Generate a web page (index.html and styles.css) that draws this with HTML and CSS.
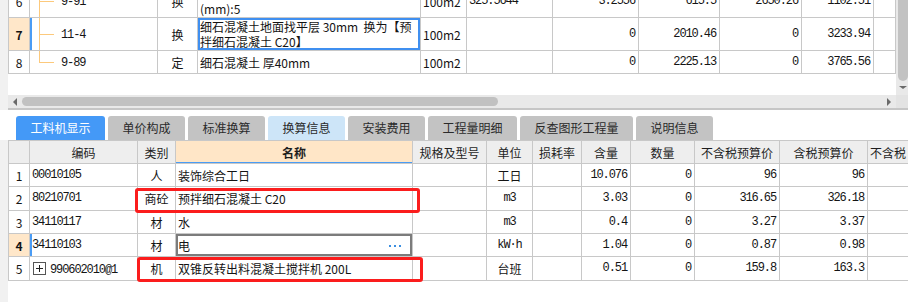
FILE: index.html
```html
<!DOCTYPE html>
<html lang="zh-CN">
<head>
<meta charset="utf-8">
<title>工料机显示</title>
<link rel="stylesheet" href="styles.css">
</head>
<body>
<div class="page">
  <div class="upper">
    <div class="gutter"></div>
    <div class="upper-main">
      <div class="upper-body">
        <div class="viewport">
          <table class="grid top-grid">
            <colgroup>
              <col class="w21"><col class="w128"><col class="w40"><col class="w223"><col class="w46"><col class="w86"><col class="w86"><col class="w81"><col class="w82"><col class="w72"><col class="w22">
            </colgroup>
            <tr class="h33">
              <td class="c">6</td>
              <td class="tree"><span class="n">9-91</span></td>
              <td class="c">换</td>
              <td class="nm">细石混凝土地面找平层 每增减10mm<br>(mm):5</td>
              <td class="l">100m2</td>
              <td class="l n">325.5644</td>
              <td class="r n">3.2556</td>
              <td class="r n">615.5</td>
              <td class="r n">2650.26</td>
              <td class="r n">1102.51</td>
              <td></td>
            </tr>
            <tr class="h33">
              <td class="c sel">7</td>
              <td class="tree mark"><span class="n">11-4</span></td>
              <td class="c">换</td>
              <td class="nm focus">细石混凝土地面找平层 30mm&nbsp; 换为【预<br>拌细石混凝土 C20】</td>
              <td class="l">100m2</td>
              <td></td>
              <td class="r n">0</td>
              <td class="r n">2010.46</td>
              <td class="r n">0</td>
              <td class="r n">3233.94</td>
              <td></td>
            </tr>
            <tr class="h23">
              <td class="c">8</td>
              <td class="tree last"><span class="n">9-89</span></td>
              <td class="c">定</td>
              <td class="nm">细石混凝土 厚40mm</td>
              <td class="l">100m2</td>
              <td></td>
              <td class="r n">0</td>
              <td class="r n">2225.13</td>
              <td class="r n">0</td>
              <td class="r n">3765.56</td>
              <td></td>
            </tr>
          </table>
        </div>
        <div class="vscroll">
          <div class="vthumb"></div>
          <div class="arrow-down"></div>
        </div>
      </div>
      <div class="hscroll">
        <div class="arrow-left"></div>
        <div class="hthumb"></div>
        <div class="spacer"></div>
        <div class="arrow-right"></div>
        <div class="corner"></div>
      </div>
    </div>
  </div>

  <div class="tabs">
    <div class="tab active">工料机显示</div>
    <div class="tab">单价构成</div>
    <div class="tab">标准换算</div>
    <div class="tab soft">换算信息</div>
    <div class="tab">安装费用</div>
    <div class="tab">工程量明细</div>
    <div class="tab">反查图形工程量</div>
    <div class="tab">说明信息</div>
  </div>

  <div class="lower">
    <div class="gutter"></div>
    <div class="lower-view">
      <table class="grid low-grid">
        <colgroup>
          <col class="w21"><col class="w108"><col class="w38"><col class="w237"><col class="w74"><col class="w46"><col class="w49"><col class="w49"><col class="w64"><col class="w85"><col class="w88"><col class="w60">
        </colgroup>
        <tr class="hd">
          <th></th>
          <th>编码</th>
          <th>类别</th>
          <th class="name-h">名称</th>
          <th>规格及型号</th>
          <th>单位</th>
          <th>损耗率</th>
          <th>含量</th>
          <th>数量</th>
          <th>不含税预算价</th>
          <th>含税预算价</th>
          <th class="l">不含税</th>
        </tr>
        <tr class="h23">
          <td class="c">1</td>
          <td class="l n">00010105</td>
          <td class="c">人</td>
          <td class="nm">装饰综合工日</td>
          <td></td>
          <td class="c">工日</td>
          <td></td>
          <td class="r n">10.076</td>
          <td class="r n">0</td>
          <td class="r n">96</td>
          <td class="r n">96</td>
          <td></td>
        </tr>
        <tr class="h24">
          <td class="c">2</td>
          <td class="l n">80210701</td>
          <td class="c">商砼</td>
          <td class="nm">预拌细石混凝土 C20</td>
          <td></td>
          <td class="c n">m3</td>
          <td></td>
          <td class="r n">3.03</td>
          <td class="r n">0</td>
          <td class="r n">316.65</td>
          <td class="r n">326.18</td>
          <td></td>
        </tr>
        <tr class="h23">
          <td class="c">3</td>
          <td class="l n">34110117</td>
          <td class="c">材</td>
          <td class="nm">水</td>
          <td></td>
          <td class="c n">m3</td>
          <td></td>
          <td class="r n">0.4</td>
          <td class="r n">0</td>
          <td class="r n">3.27</td>
          <td class="r n">3.37</td>
          <td></td>
        </tr>
        <tr class="h23">
          <td class="c sel">4</td>
          <td class="l n mark">34110103</td>
          <td class="c">材</td>
          <td class="nm edit">电<svg class="dots" width="12" height="3" viewBox="0 0 12 3"><rect x="0" y="0" width="2" height="2" fill="#3b8ee0"/><rect x="5" y="0" width="2" height="2" fill="#3b8ee0"/><rect x="10" y="0" width="2" height="2" fill="#3b8ee0"/></svg></td>
          <td></td>
          <td class="c n">kW·h</td>
          <td></td>
          <td class="r n">1.04</td>
          <td class="r n">0</td>
          <td class="r n">0.87</td>
          <td class="r n">0.98</td>
          <td></td>
        </tr>
        <tr class="h24">
          <td class="c">5</td>
          <td class="l"><svg class="plus" width="13" height="13" viewBox="0 0 13 13"><rect x="0.5" y="0.5" width="12" height="12" fill="#fff" stroke="#555"/><path d="M3 6.5h7M6.5 3v7" stroke="#222" stroke-width="1"/></svg><span class="n">990602010@1</span></td>
          <td class="c">机</td>
          <td class="nm">双锥反转出料混凝土搅拌机 200L</td>
          <td></td>
          <td class="c">台班</td>
          <td></td>
          <td class="r n">0.51</td>
          <td class="r n">0</td>
          <td class="r n">159.8</td>
          <td class="r n">163.3</td>
          <td></td>
        </tr>
      </table>
      <div class="redbox box1"></div>
      <div class="redbox box2"></div>
    </div>
  </div>
</div>
</body>
</html>
```
FILE: styles.css
```css
* { box-sizing: border-box; margin: 0; padding: 0; }
html, body { width: 908px; height: 302px; overflow: hidden; background: #fff; }
body { font-family: "Noto Sans CJK SC", "Noto Sans", sans-serif; font-size: 12px; color: #141414; }

.page { display: flex; flex-direction: column; height: 302px; }

.gutter { width: 8px; flex: none; background: #f1f1f1; }

/* upper pane */
.upper { display: flex; height: 110px; flex: none; }
.upper-main { flex: 1; display: flex; flex-direction: column; }
.upper-body { display: flex; height: 95px; }
.viewport { flex: 1; overflow: hidden; background: #fff; }
.top-grid { margin-top: -16px; }

.vscroll { width: 13px; flex: none; background: #e9e9e9; display: flex; flex-direction: column; align-items: center; }
.vthumb { width: 10px; height: 81px; background: #c2c2c2; border-radius: 0 0 5px 5px; }
.arrow-down { margin-top: 5px; width: 0; height: 0; border-left: 4px solid transparent; border-right: 4px solid transparent; border-top: 3px solid #6a6a6a; }

.hscroll { height: 15px; display: flex; align-items: center; background: #e9e9e9; border-bottom: 2px solid #c6c6c6; padding-bottom: 0; }
.arrow-left { margin-left: 5px; width: 0; height: 0; border-top: 4px solid transparent; border-bottom: 4px solid transparent; border-right: 4px solid #6a6a6a; }
.hthumb { margin-left: 5px; width: 476px; height: 9px; border-radius: 5px; background: #c1c1c1; }
.spacer { flex: 1; }
.arrow-right { width: 0; height: 0; border-top: 4px solid transparent; border-bottom: 4px solid transparent; border-left: 4px solid #6a6a6a; margin-right: 5px; }
.corner { width: 13px; height: 13px; background: #e3e3e3; }

/* grids */
.grid { border-collapse: collapse; table-layout: fixed; }
.grid td, .grid th { border: 1px solid #c8c8c8; padding: 0 2px; white-space: nowrap; overflow: hidden; vertical-align: middle; line-height: 15px; }
.top-grid { width: 887px; }
.low-grid { width: 919px; }

.w21 { width: 21px; } .w22 { width: 22px; } .w38 { width: 38px; } .w40 { width: 40px; }
.w46 { width: 46px; } .w49 { width: 49px; } .w60 { width: 60px; } .w64 { width: 64px; }
.w72 { width: 72px; } .w74 { width: 74px; } .w81 { width: 81px; } .w82 { width: 82px; }
.w85 { width: 85px; } .w86 { width: 86px; } .w88 { width: 88px; } .w108 { width: 108px; }
.w128 { width: 128px; } .w223 { width: 223px; } .w237 { width: 237px; }

.h33 { height: 33px; } .h23 { height: 23px; } .h24 { height: 24px; }

.c { text-align: center; }
.l { text-align: left; }
.r { text-align: right; }
.grid td.r { padding-right: 3px; }
.n { font-family: "Liberation Mono", "DejaVu Sans Mono", monospace; letter-spacing: -1.1px; }

.sel { background: #ffe7c9; font-weight: bold; }
.mark { box-shadow: inset 2px 0 0 #4a9cf5; }
.focus { box-shadow: inset 0 0 0 2px #3f8ff0; }
.edit { box-shadow: inset 0 0 0 2px #7c7c7c; position: relative; }
.dots { position: absolute; right: 11px; top: 11px; }

/* tree */
.grid td.tree { padding-left: 31px; position: relative; }
.tree::before { content: ""; position: absolute; left: 9px; top: 0; bottom: 0; width: 1px; background: #fcc97c; }
.tree.last::before { bottom: 50%; }
.tree::after { content: ""; position: absolute; left: 9px; top: 50%; width: 15px; height: 1px; background: #fcc97c; }

/* tabs */
.tabs { height: 30px; flex: none; display: flex; align-items: flex-end; gap: 3px; padding-left: 16px; background: #fff; }
.tab { height: 24px; line-height: 24px; padding: 0 14.5px; background: #c3c3c3; border-radius: 3px 3px 0 0; color: #2a2a2a; white-space: nowrap; }
.tab.active { background: #4499f7; color: #fff; }
.tab.soft { background: #cde5f8; }

/* lower pane */
.lower { display: flex; flex: 1; }
.lower-view { flex: 1; overflow: hidden; position: relative; }
.hd { height: 23px; }
.hd th { background: #eeeeee; font-weight: normal; text-align: center; color: #1e1e1e; }
.hd th.name-h { background: #ffe6c7; font-weight: bold; box-shadow: inset 0 -1px 0 #4a9cf5; }
.hd th.l { text-align: left; }

.plus { vertical-align: -2px; margin-left: 1px; margin-right: 4px; }

.redbox { position: absolute; border: 3px solid #fb1d1d; border-radius: 3px; }
.box1 { left: 127px; top: 48px; width: 285px; height: 25px; }
.box2 { left: 129px; top: 117px; width: 286px; height: 25px; }
```
